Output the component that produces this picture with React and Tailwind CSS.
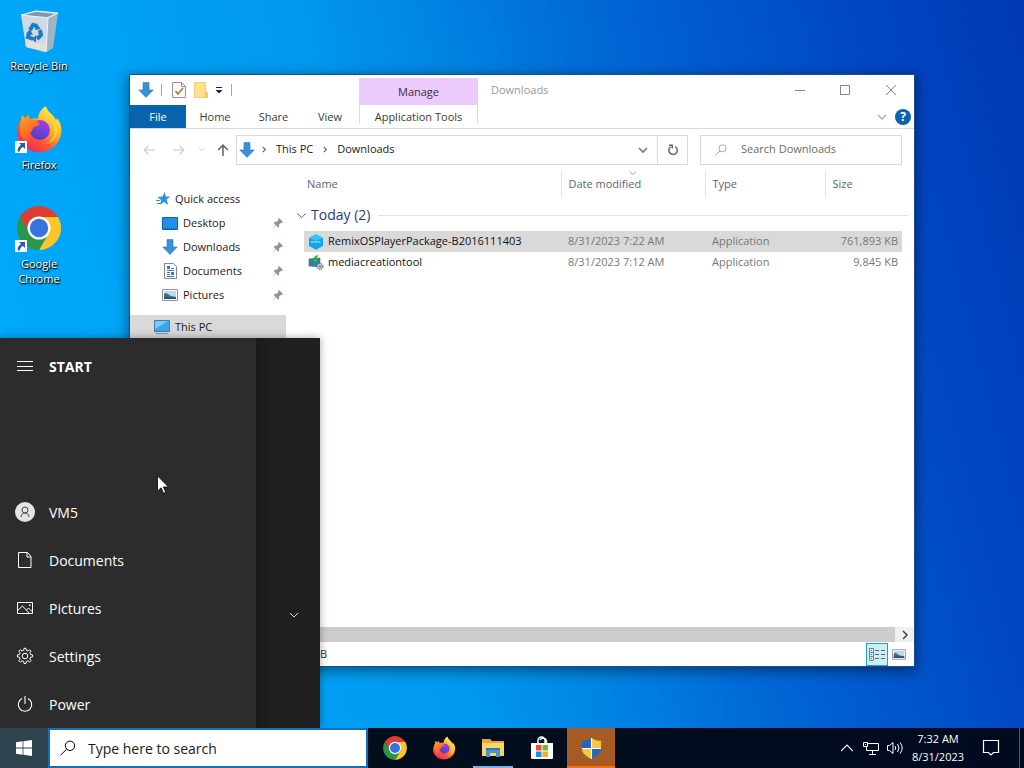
import { useId } from 'react';

/* ---------- icons ---------- */

function ChromeIcon({ className }) {
  return (
    <svg viewBox="0 0 48 48" className={className} aria-hidden="true">
      <path fill="#dc3f31" d="M24 13H43.05A22 22 0 0 0 4.95 13L14.47 29.5A11 11 0 0 1 24 13Z" />
      <path fill="#fcc629" d="M33.53 29.5 24 46A22 22 0 0 0 43.05 13H24A11 11 0 0 1 33.53 29.5Z" />
      <path fill="#2a9648" d="M14.47 29.5 4.95 13A22 22 0 0 0 24 46L33.53 29.5A11 11 0 0 1 14.47 29.5Z" />
      <circle cx="24" cy="24" r="11.5" fill="#fff" />
      <circle cx="24" cy="24" r="9.2" fill="#3871e0" />
    </svg>
  );
}

function FirefoxIcon({ className }) {
  const id = useId();
  return (
    <svg viewBox="0 0 48 48" className={className} aria-hidden="true">
      <defs>
        <linearGradient id={`${id}body`} x1="0.8" y1="0.1" x2="0.2" y2="0.95">
          <stop offset="0" stopColor="#fff04a" />
          <stop offset="0.35" stopColor="#ffb02a" />
          <stop offset="0.65" stopColor="#ff5a30" />
          <stop offset="1" stopColor="#ee2462" />
        </linearGradient>
        <linearGradient id={`${id}globe`} x1="0.7" y1="0" x2="0.3" y2="1">
          <stop offset="0" stopColor="#a040e8" />
          <stop offset="1" stopColor="#4b3fc8" />
        </linearGradient>
        <linearGradient id={`${id}head`} x1="0" y1="0.2" x2="0.5" y2="1">
          <stop offset="0" stopColor="#ff9a22" />
          <stop offset="0.5" stopColor="#ff7424" />
          <stop offset="1" stopColor="#fb3f42" />
        </linearGradient>
      </defs>
      <path
        fill={`url(#${id}body)`}
        d="M31 1c1 5 5 7 8 11 1 1 2 3 2 4l1-3c4 5 5 10 4 16-2 11-11 18-22 18S2 39 2 27c0-5 2-9 4-12l1-5 3 3 3-3 2 4c3-1 6-1 8 0 0-5 3-10 8-13Z"
      />
      <circle cx="25" cy="25" r="10" fill={`url(#${id}globe)`} />
      <path fill={`url(#${id}head)`} d="M6 15l1-5 3 3 3-3 2 4c3 0 6 1 8 3l2 2c-1 2-4 2-6 3-2 2-1 4-4 6-1 6 5 10 10 9-9 5-19-1-20-10 0-4 0-8 1-12Z" />
      <path fill="#ffd43a" fillOpacity=".8" d="M29 5c1 6 8 9 10 17 2 9-3 15-9 18 12-3 15-14 11-22-3-5-9-7-12-13Z" />
    </svg>
  );
}

function RecycleBinIcon({ className }) {
  return (
    <svg viewBox="0 0 48 48" className={className} aria-hidden="true">
      <path fill="#b6c3cd" d="m37 43 2-2-8 5-6-1Z" />
      <path fill="#cfdbe3" d="m6 9 27 3-2 34-20-5Z" />
      <path fill="#9fb5c4" d="m33 12 10-5-5 35-7 4Z" />
      <path fill="#bccad3" d="m6 9 15-4 22 2-10 5Z" />
      <path fill="#8197a5" d="m9 9 12-3 18 2-7 3Z" />
      <path fill="#e2e0da" d="m10 34 21 4v8l-20-5Z" />
      <path fill="none" stroke="#f0f5f8" d="m6 9 15-4 22 2-10 5Z M33 12l-2 34" />
      <g fill="none" stroke="#1b7bc5" strokeWidth="4">
        <path d="m15 24 3-5 4 1" />
        <path d="m25 24 1 5-4 4" />
        <path d="m18 33-5-2 1-4" />
      </g>
      <path fill="#1b7bc5" d="m21 17 5 6-6 1ZM21 29v8l-4-4ZM11 28l4-5 3 6Z" />
    </svg>
  );
}

function DownArrow({ className }) {
  return (
    <svg viewBox="0 0 16 16" className={className} aria-hidden="true">
      <path fill="#3a8fd6" stroke="#2477bd" strokeWidth=".6" d="M5 .6h6v7.4h4.2L8 15.4.8 8H5Z" />
    </svg>
  );
}

function ShortcutBadge() {
  return (
    <svg viewBox="0 0 12 12" className="absolute bottom-0 left-0 size-3" aria-hidden="true">
      <path fill="#fff" d="M0 0h12v12H0Z" />
      <path fill="#2c5da8" d="M4 2h6v6L8 6C6 7 5 8 5 10L3 11C2 8 3 6 6 4Z" />
    </svg>
  );
}

function Chevron({ className, d = 'm1 3 4 4 4-4', width = 1 }) {
  return (
    <svg viewBox="0 0 10 10" className={className} fill="none" stroke="currentColor" strokeWidth={width} aria-hidden="true">
      <path d={d} />
    </svg>
  );
}

function SearchIcon({ className }) {
  return (
    <svg viewBox="0 0 16 16" className={className} fill="none" stroke="currentColor" aria-hidden="true">
      <circle cx="10" cy="5.8" r="4.7" />
      <path d="M6.6 9.2.6 15.2" />
    </svg>
  );
}

function PictureIcon({ className }) {
  return (
    <svg viewBox="0 0 16 12" className={className} aria-hidden="true">
      <path fill="#fff" stroke="#8b959d" d="M.5.5h15v11H.5Z" />
      <path fill="#b7d9f2" d="M2 2h12v8H2Z" />
      <path fill="#476a82" d="M2 5c3-2 4 1 7 2l5 1v2H2Z" />
      <path fill="#274c66" d="M2 8.5h12V10H2Z" />
    </svg>
  );
}

function DocumentIcon({ className }) {
  return (
    <svg viewBox="0 0 13 16" className={className} aria-hidden="true">
      <path fill="#fff" stroke="#7d8890" d="M.5.5h9l3 3v12H.5Z" />
      <path stroke="#2f7cc0" d="M3 3.500h3M7 5.500h3M3 7.500h7M3 9.500h3M7 11.500h3M3 11.500h3M3 13.500h7" />
      <path fill="#2f7cc0" d="M3 4h3v2H3ZM7 9h3v2H7Z" />
    </svg>
  );
}

function MonitorIcon({ className }) {
  return (
    <svg viewBox="0 0 16 15" className={className} aria-hidden="true">
      <path fill="#38a7ee" stroke="#2a6d9e" strokeWidth=".8" d="M.5.5h15v11H.5Z" />
      <path fill="#7cc8f6" d="M1 1h13L1 9Z" />
      <path stroke="#7f97a8" d="M2 13.500h12" />
    </svg>
  );
}

function DesktopIcon({ className }) {
  return (
    <svg viewBox="0 0 16 13" className={className} aria-hidden="true">
      <path fill="#1e90ea" stroke="#0f66b0" d="M.5.5h15v12H.5Z" />
      <path stroke="#0b4f8c" strokeDasharray="1 1" d="M1 11.500h14" />
    </svg>
  );
}

function StarIcon({ className }) {
  return (
    <svg viewBox="0 0 16 16" className={className} aria-hidden="true">
      <path fill="#2c92dd" d="m9.500 1 1.300 4.500 4.600.3-3.800 2.800 1.600 5.400-4.300-3L4.700 14l1.500-4.700L2.500 6l5-.6Z" />
      <path stroke="#2c92dd" d="M1 9.500h4M2 12.500h4" />
    </svg>
  );
}

function PinIcon() {
  return (
    <svg viewBox="0 0 10 10" className="size-[10px]" aria-hidden="true">
      <path fill="#8d959c" d="M6 0l4 4-1 1-1-.3-2 2 .2 1.800-1 1L3 7.300.3 10l-.3-.3L2.700 7 .6 4.800l1-1 1.800.2 2-2L5.200 1Z" />
    </svg>
  );
}

function RemixIcon() {
  return (
    <svg viewBox="0 0 16 16" className="size-4 shrink-0" aria-hidden="true">
      <path fill="#12a5ee" d="M8 .3 15 4v8l-7 3.700L1 12V4Z" />
      <path fill="#38c1fa" d="M8 .3 15 4 8 7 1 4Z" />
      <path stroke="#9fdcf8" strokeWidth="1.500" strokeDasharray="2 .5" d="M3 8h10" />
    </svg>
  );
}

function MediaToolIcon() {
  return (
    <svg viewBox="0 0 16 16" className="size-4 shrink-0" aria-hidden="true">
      <path fill="#357fa8" stroke="#44606f" strokeWidth=".6" d="m1 4 11-1v9L1 11Z" />
      <circle cx="12" cy="11.500" r="3" fill="#c4cbd0" stroke="#59646b" strokeDasharray="1.500 .6" />
      <circle cx="12" cy="11.500" r="1" fill="#59646b" />
      <path fill="#2ebd55" stroke="#15803a" strokeWidth=".4" d="M10 .5C6.500.7 6 2.500 6 4.500H4L7.500 8 11 4.500H8.500C8.500 3 9 1.500 10 .5Z" />
    </svg>
  );
}

/* ---------- desktop ---------- */

const shortcuts = [
  { name: 'Recycle Bin', Icon: RecycleBinIcon, badge: false },
  { name: 'Firefox', Icon: FirefoxIcon, badge: true },
  { name: 'Google Chrome', Icon: ChromeIcon, badge: true },
];

function DesktopIcons() {
  return (
    <div className="flex w-[78px] flex-col">
      {shortcuts.map(({ name, Icon, badge }) => (
        <button key={name} type="button" className="flex h-[99px] flex-col items-center gap-1 px-2 pt-[6px]">
          <span className="relative block size-12">
            <Icon className="size-full" />
            {badge && <ShortcutBadge />}
          </span>
          <span className="-mx-2 text-[11px] leading-[15px] text-white [text-shadow:0_1px_2px_#000,1px_1px_1px_#000]">
            {name === 'Google Chrome' ? <>Google<br />Chrome</> : name}
          </span>
        </button>
      ))}
    </div>
  );
}

/* ---------- explorer ---------- */

function TitleBar() {
  return (
    <div className="flex h-[54px] border-b border-[#dadbdc]">
      <div className="flex w-[229px] flex-col">
        <div className="flex h-[30px] items-center pl-2">
          <DownArrow className="size-4" />
          <span className="mx-[7px] h-3 w-px bg-[#a5a5a5]" />
          <button type="button" aria-label="Properties" className="ml-[3px]">
            <svg viewBox="0 0 14 16" className="h-4 w-[14px]" aria-hidden="true">
              <path fill="#fafafa" stroke="#9b9289" d="M.5.5h9l4 4v11H.5Z M9.500.5v4h4" />
              <path fill="none" stroke="#a5764a" strokeWidth="1.500" d="m3.500 9 2.500 3 5-6" />
            </svg>
          </button>
          <button type="button" aria-label="New folder" className="ml-2">
            <svg viewBox="0 0 14 16" className="h-4 w-[14px]" aria-hidden="true">
              <path fill="#ffe08a" stroke="#eec660" strokeWidth=".8" d="M.5.5h11v9l2 1v5H.5Z" />
              <path fill="#f3ca5c" d="M11 8l3 3v5h-3Z" />
            </svg>
          </button>
          <button type="button" aria-label="Customize Quick Access Toolbar" className="ml-[7px]">
            <svg viewBox="0 0 8 8" className="size-2" aria-hidden="true">
              <path fill="#222" d="M1 1h6v1H1ZM.5 4h7L4 7.500Z" />
            </svg>
          </button>
          <span className="ml-2 h-3 w-px bg-[#a5a5a5]" />
        </div>
        <div className="flex h-[23px] text-[11px] text-[#3a3a3a]">
          <button type="button" className="w-14 bg-[#0a63ad] pt-px text-white">File</button>
          <button type="button" className="w-[58px] pt-px">Home</button>
          <button type="button" className="w-[59px] pt-px">Share</button>
          <button type="button" className="w-[54px] pt-px">View</button>
        </div>
      </div>
      <div className="flex w-[119px] flex-col pt-[3px] text-[11px] text-[#3a3a3a]">
        <span className="flex h-[27px] items-center justify-center bg-[#ebcbfb] pt-px text-[#3d2b4c]">Manage</span>
        <button type="button" className="h-[18px] border-x border-[#dadbdc] pt-1 leading-[16px] whitespace-nowrap">Application Tools</button>
      </div>
      <span className="flex h-[30px] flex-1 items-center pl-[13px] text-[11px] text-[#999]">Downloads</span>
      <div className="flex flex-col">
        <div className="flex h-[30px] text-[#888]">
          <button type="button" aria-label="Minimize" className="flex w-[45px] items-center justify-center">
            <Chevron d="M0 5.500h10" className="size-[10px]" />
          </button>
          <button type="button" aria-label="Maximize" className="flex w-[45px] items-center justify-center">
            <Chevron d="M.5.5h9v9h-9Z" className="size-[10px]" />
          </button>
          <button type="button" aria-label="Close" className="flex w-[47px] items-center justify-center">
            <Chevron d="m0 0 10 10M10 0 0 10" className="size-[10px]" />
          </button>
        </div>
        <div className="flex h-[23px] items-center justify-end gap-2 pr-[3px]">
          <button type="button" aria-label="Expand the ribbon" className="text-[#aaa]">
            <Chevron width={1.3} className="size-[10px]" />
          </button>
          <button type="button" aria-label="Help" className="flex size-4 items-center justify-center rounded-full bg-[#0a63b0] text-[12px] font-bold text-white">?</button>
        </div>
      </div>
    </div>
  );
}

function AddressBar() {
  return (
    <div className="flex h-[41px] items-center pr-3 pl-[13px]">
      <button type="button" aria-label="Back" className="text-[#c9c9c9]">
        <Chevron d="M10 5H1M4.500 1.500 1 5l3.500 3.500" className="size-3" />
      </button>
      <button type="button" aria-label="Forward" className="ml-[18px] text-[#c9c9c9]">
        <Chevron d="M0 5h9M5.500 1.500 9 5 5.500 8.500" className="size-3" />
      </button>
      <button type="button" aria-label="Recent locations" className="ml-[13px] text-[#b5b5b5]">
        <Chevron className="size-[7px]" />
      </button>
      <button type="button" aria-label="Up" className="ml-3 text-[#666]">
        <Chevron d="M5 10V1M1 5l4-4 4 4" width={1.3} className="size-3" />
      </button>
      <div className="ml-[7px] flex h-[30px] flex-1 items-center border border-[#d9d9d9] text-[11px] text-[#222]">
        <DownArrow className="ml-[2px] size-4" />
        <Chevron d="m3 2 3 3-3 3" width={1.3} className="ml-[5px] size-[9px] text-[#666]" />
        <button type="button" className="ml-[7px]">This PC</button>
        <Chevron d="m3 2 3 3-3 3" width={1.3} className="ml-2 size-[9px] text-[#666]" />
        <button type="button" className="ml-[7px]">Downloads</button>
        <button type="button" aria-label="Previous locations" className="mr-[9px] ml-auto text-[#777]">
          <Chevron width={1.6} className="size-[10px]" />
        </button>
        <button type="button" aria-label="Refresh" className="flex h-full w-[30px] items-center justify-center border-l border-[#d9d9d9] text-[#666]">
          <svg viewBox="0 0 12 12" className="size-3" fill="none" stroke="currentColor" strokeWidth="1.500" aria-hidden="true">
            <path d="M8.200 2.700a4.200 4.200 0 1 1-4.500.1M2 1.200h3.300v3.300" />
          </svg>
        </button>
      </div>
      <label className="ml-3 flex h-[30px] w-[202px] items-center border border-[#d9d9d9] pl-[14px] text-[#8a8a8a]">
        <SearchIcon className="size-3" />
        <input
          type="text"
          aria-label="Search Downloads"
          placeholder="Search Downloads"
          className="ml-[14px] min-w-0 flex-1 text-[11px] outline-none placeholder:text-[#6b6b6b]"
        />
      </label>
    </div>
  );
}

const quickAccess = [
  { name: 'Desktop', icon: <DesktopIcon className="h-[13px] w-4" /> },
  { name: 'Downloads', icon: <DownArrow className="size-4" /> },
  { name: 'Documents', icon: <DocumentIcon className="h-4 w-[13px]" /> },
  { name: 'Pictures', icon: <PictureIcon className="h-3 w-4" /> },
];

function NavPane() {
  return (
    <nav className="w-[156px] shrink-0 pt-[17px] text-[11px] text-[#1a1a1a]">
      <button type="button" className="flex h-6 w-full items-center gap-1 pl-[25px]">
        <StarIcon className="size-4" />
        Quick access
      </button>
      {quickAccess.map(item => (
        <button key={item.name} type="button" className="flex h-6 w-full items-center pr-[3px] pl-8">
          <span className="mr-[5px] flex w-4 justify-center">{item.icon}</span>
          {item.name}
          <span className="ml-auto"><PinIcon /></span>
        </button>
      ))}
      <button type="button" className="mt-2 flex h-6 w-full items-center gap-[5px] bg-[#d9d9d9] pl-6">
        <MonitorIcon className="h-[15px] w-4" />
        This PC
      </button>
    </nav>
  );
}

const files = [
  { name: 'RemixOSPlayerPackage-B2016111403', icon: <RemixIcon />, date: '8/31/2023 7:22 AM', type: 'Application', size: '761,893 KB', selected: true },
  { name: 'mediacreationtool', icon: <MediaToolIcon />, date: '8/31/2023 7:12 AM', type: 'Application', size: '9,845 KB', selected: false },
];

function FileList() {
  return (
    <div className="flex-1 pt-px pl-[10px]">
      <table className="w-full table-fixed border-collapse text-left text-[11px]">
        <colgroup>
          <col className="w-2" />
          <col />
          <col className="w-[144px]" />
          <col className="w-[120px]" />
          <col className="w-[77px]" />
          <col className="w-3" />
        </colgroup>
        <thead>
          <tr className="h-[26px] text-[#5c6470]">
            <th />
            <th className="pl-[3px] font-normal">Name</th>
            <th className="relative border-l border-[#e5e5e5] pl-[7px] font-normal">
              Date modified
              <Chevron className="absolute top-[-2px] left-1/2 size-2 -translate-x-1/2 text-[#888]" />
            </th>
            <th className="border-l border-[#e5e5e5] pl-[7px] font-normal">Type</th>
            <th className="border-l border-[#e5e5e5] pl-[7px] font-normal">Size</th>
            <th />
          </tr>
        </thead>
        <tbody>
          <tr className="h-[34px]">
            <th colSpan={6} className="pr-[6px] font-normal">
              <div className="flex items-center pt-[2px]">
                <Chevron className="size-[11px] text-[#555]" width={0.9} />
                <span className="ml-1 text-[14px] leading-5 text-[#2b3a77]">Today (2)</span>
                <span className="ml-2 h-px flex-1 bg-[#e2e2e2]" />
              </div>
            </th>
          </tr>
          {files.map(file => (
            <tr key={file.name} className="h-[21px] text-[#777]">
              <td />
              <td className={file.selected ? 'bg-[#d9d9d9] pl-1' : 'pl-1'}>
                <span className="flex items-center gap-1 whitespace-nowrap text-[#111]">
                  {file.icon}
                  {file.name}
                </span>
              </td>
              <td className={file.selected ? 'bg-[#d9d9d9] pl-[7px]' : 'pl-[7px]'}>{file.date}</td>
              <td className={file.selected ? 'bg-[#d9d9d9] pl-[7px]' : 'pl-[7px]'}>{file.type}</td>
              <td className={file.selected ? 'bg-[#d9d9d9] pr-1 text-right' : 'pr-1 text-right'}>{file.size}</td>
              <td />
            </tr>
          ))}
        </tbody>
      </table>
    </div>
  );
}

function ExplorerWindow() {
  return (
    <section
      aria-label="Downloads"
      className="absolute top-[75px] right-[110px] bottom-[102px] left-[130px] flex flex-col bg-white shadow-[0_0_0_1px_#1c4f86,0_3px_12px_2px_rgba(0,0,0,0.45)]"
    >
      <TitleBar />
      <AddressBar />
      <div className="flex min-h-0 flex-1 overflow-hidden">
        <NavPane />
        <FileList />
      </div>
      <div className="flex h-[15px] items-center bg-[#f0f0f0] pl-[156px]">
        <span className="h-full flex-1 bg-[#cdcdcd]" />
        <button type="button" aria-label="Scroll right" className="flex w-[19px] justify-center pl-px text-[#444]">
          <Chevron d="m3 1 4 4-4 4" width={1.5} className="size-[10px]" />
        </button>
      </div>
      <div className="flex h-6 items-center pr-[7px] text-[11px] text-[#333]">
        <span className="w-[197px] text-right whitespace-nowrap">1 item selected&nbsp; 744 MB</span>
        <button type="button" aria-label="Details view" className="ml-auto flex h-[23px] w-[22px] items-center justify-center border border-[#26a0b5] bg-[#cdeef5]">
          <svg viewBox="0 0 17 13" className="h-[13px] w-[17px]" fill="none" aria-hidden="true">
            <path stroke="#7a858c" d="M.5.5h4v12h-4ZM.5 4.500h4M.5 8.500h4" />
            <path stroke="#5a676f" d="M2 2.500h1M2 6.500h1M2 10.500h1M6 2.500h4M12 2.500h4M6 6.500h4M12 6.500h4M6 10.500h4M12 10.500h4" />
          </svg>
        </button>
        <button type="button" aria-label="Large icons view" className="ml-[3px] p-px">
          <PictureIcon className="h-[11px] w-[14px]" />
        </button>
      </div>
    </section>
  );
}

/* ---------- start menu ---------- */

const startItems = [
  {
    name: 'VM5',
    icon: (
      <svg viewBox="0 0 20 20" className="size-5" fill="none" aria-hidden="true">
        <circle cx="10" cy="10" r="10" fill="#e4e4e4" />
        <circle cx="10" cy="8" r="3" stroke="#444" />
        <path stroke="#444" d="M6 15c.2-2.500 1.700-4 4-4s3.800 1.500 4 4" />
      </svg>
    ),
  },
  {
    name: 'Documents',
    icon: (
      <svg viewBox="0 0 16 18" className="h-[18px] w-4" fill="none" stroke="#fff" aria-hidden="true">
        <path d="M1.500 1.500h9l3.500 4v11H1.500ZM10 1.500v4.500h4" />
      </svg>
    ),
  },
  {
    name: 'Pictures',
    icon: (
      <svg viewBox="0 0 16 12" className="h-3 w-4" fill="none" stroke="#fff" aria-hidden="true">
        <path d="M.5.5h15v11H.5ZM.5 8.500 5.500 4l7 7.500M9.500 8l2-2 4 4" />
        <path fill="#fff" stroke="none" d="M12 2.500h1.500V4H12Z" />
      </svg>
    ),
  },
  {
    name: 'Settings',
    icon: (
      <svg viewBox="0 0 18 18" className="size-[18px]" fill="none" stroke="#fff" aria-hidden="true">
        <path
          strokeLinejoin="round"
          d="M7.700 3.300 8 1.300h2l.3 2 1.700.7 1.600-1.300 1.500 1.500-1.300 1.600.8 1.800 2 .3v2l-2 .3-.8 1.800 1.300 1.600-1.500 1.500-1.600-1.300-1.700.7-.3 2H8l-.3-2-1.700-.7-1.600 1.300-1.500-1.500L4.200 12l-.8-1.800-2-.3v-2l2-.3.8-1.800-1.300-1.600 1.500-1.500L6 4Z"
        />
        <circle cx="9" cy="9" r="2.800" />
      </svg>
    ),
  },
  {
    name: 'Power',
    icon: (
      <svg viewBox="0 0 16 18" className="h-[18px] w-4" fill="none" stroke="#fff" strokeWidth="1.100" aria-hidden="true">
        <path d="M5 3.600a6.700 6.700 0 1 0 6 0M8 1v8" />
      </svg>
    ),
  },
];

function StartMenu() {
  return (
    <aside className="absolute bottom-10 left-0 flex h-[390px] w-80 bg-[linear-gradient(90deg,#191919_256px,#1f1f1f_272px)] text-[14px] text-white shadow-[0_0_8px_rgba(0,0,0,0.35)]">
      <div className="flex w-64 flex-col justify-between bg-[#2c2c2c] pt-1">
        <button type="button" className="flex h-12 w-full items-center font-bold">
          <span className="flex w-[49px] justify-center">
            <svg viewBox="0 0 16 10" className="h-[10px] w-4" stroke="#fff" aria-hidden="true">
              <path d="M0 .5h16M0 5.500h16M0 9.500h16" />
            </svg>
          </span>
          START
        </button>
        <ul>
          {startItems.map(item => (
            <li key={item.name}>
              <button type="button" className="flex h-12 w-full items-center">
                <span className="flex w-[49px] justify-center">{item.icon}</span>
                {item.name}
              </button>
            </li>
          ))}
        </ul>
      </div>
      <button type="button" aria-label="Expand" className="mt-auto mb-[107px] ml-8 self-end p-px text-[#ddd]">
        <Chevron className="size-[10px]" />
      </button>
    </aside>
  );
}

/* ---------- taskbar ---------- */

function TaskButton({ label, className = '', bar, children }) {
  return (
    <button type="button" aria-label={label} className={`relative flex h-full w-12 items-center justify-center ${className}`}>
      {children}
      {bar && <span className={`absolute bottom-0 h-[2px] ${bar}`} />}
    </button>
  );
}

function Taskbar() {
  return (
    <footer className="absolute inset-x-0 bottom-0 flex h-10 items-center bg-linear-to-r from-[#02101a] to-[#020a20] text-white">
      <button type="button" aria-label="Start" className="flex h-full w-12 items-center justify-center bg-[#2f434e]">
        <svg viewBox="0 0 16 16" className="size-4" fill="#fff" aria-hidden="true">
          <path d="m0 2.200 6.600-.9v6.300H0ZM7.400 1.200 16 0v7.600H7.400ZM0 8.400h6.600v6.300L0 13.800ZM7.400 8.400H16V16l-8.600-1.200Z" />
        </svg>
      </button>
      <label className="flex h-full w-[320px] items-center border-2 border-[#0f70bd] bg-white pl-[10px] text-black">
        <SearchIcon className="size-4" />
        <input
          type="text"
          aria-label="Type here to search"
          placeholder="Type here to search"
          className="ml-3 min-w-0 flex-1 text-[14px] outline-none placeholder:text-[#1a1a1a]"
        />
      </label>
      <div className="ml-[3px] flex h-full gap-px">
        <TaskButton label="Google Chrome"><ChromeIcon className="size-[26px]" /></TaskButton>
        <TaskButton label="Firefox"><FirefoxIcon className="size-6" /></TaskButton>
        <TaskButton label="File Explorer" bar="inset-x-1 bg-[#76b3e6]">
          <svg viewBox="0 0 22 20" className="h-5 w-[22px]" aria-hidden="true">
            <path fill="#e8a93a" d="M0 1h8l2 2h12v6H0Z" />
            <path fill="#fbd46c" d="M0 5h22v13H0Z" />
            <path fill="#4596d1" d="M4 10h14v9h-4v-4H8v4H4Z" />
            <path fill="#2b78b4" d="M4 10h14v2H4Z" />
          </svg>
        </TaskButton>
        <TaskButton label="Microsoft Store">
          <svg viewBox="0 0 24 24" className="size-6" aria-hidden="true">
            <path fill="none" stroke="#fff" strokeWidth="1.500" d="M8 7V4.500a3.500 3.500 0 0 1 7 0V7M10 4a3.500 3.500 0 0 1 6.500 1V7" />
            <path fill="#fff" d="M1 7h22v15q0 1-1 1H2q-1 0-1-1Z" />
            <path fill="#e8502a" d="M6 9h5.500v5.500H6Z" />
            <path fill="#7ab532" d="M12.500 9H18v5.500h-5.500Z" />
            <path fill="#1c93d8" d="M6 15.500h5.500V21H6Z" />
            <path fill="#f4b31c" d="M12.500 15.500H18V21h-5.500Z" />
          </svg>
        </TaskButton>
        <TaskButton label="User Account Control" className="bg-[#a65b24]" bar="inset-x-0 bg-[#f7700f]">
          <svg viewBox="0 0 22 24" className="h-[23px] w-[21px]" aria-hidden="true">
            <path fill="#2267bd" d="M11 1C8 3 4 4 1 4v8h10Z" />
            <path fill="#f6c945" d="M11 1c3 2 7 3 10 3v8H11Z" />
            <path fill="#f6c945" d="M1 12c0 5 5 9 10 11V12Z" />
            <path fill="#2267bd" d="M21 12c0 5-5 9-10 11V12Z" />
            <path stroke="#fff" strokeWidth="1.200" d="M11 1v22M1 12h20" />
          </svg>
        </TaskButton>
      </div>
      <div className="ml-auto flex h-full items-center">
        <button type="button" aria-label="Show hidden icons">
          <Chevron d="m0 7.500 5-5 5 5" className="size-3" />
        </button>
        <button type="button" aria-label="Network" className="ml-[10px]">
          <svg viewBox="0 0 16 14" className="h-[14px] w-4" fill="none" stroke="#fff" aria-hidden="true">
            <path d="M5 2.500h10.500v7H3.500V6M6 13.500h7M9.500 9.500v4M.5 1.500h4v4h-4Z" />
            <path d="M2 3.500h1" />
          </svg>
        </button>
        <button type="button" aria-label="Volume" className="ml-2">
          <svg viewBox="0 0 17 14" className="h-[14px] w-[17px]" fill="none" stroke="#fff" aria-hidden="true">
            <path d="M.5 4.500h2L6 1.500v11l-3.500-3h-2ZM8 5q1.500 2 0 4M10.500 3q3 4 0 8M13 1.500q4.500 5.500 0 11" />
          </svg>
        </button>
        <button type="button" className="ml-1 w-[60px] text-center text-[11px] leading-[18px] whitespace-nowrap">
          <time className="block">7:32 AM</time>
          <time className="block">8/31/2023</time>
        </button>
        <button type="button" aria-label="Notifications" className="ml-[14px]">
          <svg viewBox="0 0 18 18" className="size-[18px]" fill="none" stroke="#fff" strokeWidth="1.200" aria-hidden="true">
            <path d="M1.500 1.500h15v12h-5L9 16l-2.500-2.500h-5Z" />
          </svg>
        </button>
        <button type="button" aria-label="Show desktop" className="ml-[19px] h-full w-[5px] border-l border-[#4b5565]" />
      </div>
    </footer>
  );
}

export default function App() {
  return (
    <main className="relative h-screen overflow-hidden bg-[linear-gradient(76deg,#00acfa_0%,#00a2f6_24%,#0098ee_40%,#0080e0_53%,#006cd8_62%,#0058cc_74%,#0042be_90%,#003ab4_100%)] font-['Open_Sans','Noto_Sans',sans-serif]">
      <DesktopIcons />
      <ExplorerWindow />
      <StartMenu />
      <Taskbar />
      <svg viewBox="0 0 12 19" className="absolute top-[475px] left-[157px] h-[19px] w-3" aria-hidden="true">
        <path fill="#fff" stroke="#000" strokeWidth=".8" d="M.5.8v15.400l3.600-3.400 2.400 5.500 2.300-1-2.400-5.300h5Z" />
      </svg>
    </main>
  );
}
